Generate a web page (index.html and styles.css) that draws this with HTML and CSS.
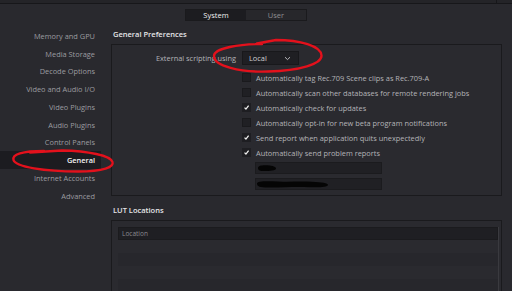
FILE: index.html
```html
<!DOCTYPE html>
<html>
<head>
<meta charset="utf-8">
<link rel="stylesheet" href="styles.css">
</head>
<body>
<div class="app">
  <div class="topstrip"><div class="topdivider"></div></div>
  <div class="tabs-row">
    <div class="tabs">
      <div class="tab tab-active">System</div>
      <div class="tab">User</div>
    </div>
  </div>
  <div class="body">
    <nav class="sidebar">
      <div class="nav-item">Memory and GPU</div>
      <div class="nav-item">Media Storage</div>
      <div class="nav-item">Decode Options</div>
      <div class="nav-item">Video and Audio I/O</div>
      <div class="nav-item">Video Plugins</div>
      <div class="nav-item">Audio Plugins</div>
      <div class="nav-item">Control Panels</div>
      <div class="nav-item nav-active">General</div>
      <div class="nav-item">Internet Accounts</div>
      <div class="nav-item">Advanced</div>
    </nav>
    <main class="main">
      <h2 class="section-title">General Preferences</h2>
      <section class="panel panel-general">
        <div class="form-row">
          <label class="form-label">External scripting using</label>
          <div class="select">
            <span>Local</span>
            <svg class="chev" width="7" height="5" viewBox="0 0 7 5"><path d="M1 1.2 L3.5 3.6 L6 1.2" fill="none" stroke="#b8b8bc" stroke-width="1"/></svg>
          </div>
        </div>
        <div class="checks">
          <div class="check-row"><span class="cb"></span><span>Automatically tag Rec.709 Scene clips as Rec.709-A</span></div>
          <div class="check-row"><span class="cb"></span><span>Automatically scan other databases for remote rendering jobs</span></div>
          <div class="check-row"><span class="cb cb-on"><svg width="9" height="9" viewBox="0 0 9 9"><path d="M2 4.6 L3.8 6.6 L7.2 2" fill="none" stroke="#f2f2f2" stroke-width="1.6"/></svg></span><span>Automatically check for updates</span></div>
          <div class="check-row"><span class="cb"></span><span>Automatically opt-in for new beta program notifications</span></div>
          <div class="check-row"><span class="cb cb-on"><svg width="9" height="9" viewBox="0 0 9 9"><path d="M2 4.6 L3.8 6.6 L7.2 2" fill="none" stroke="#f2f2f2" stroke-width="1.6"/></svg></span><span>Send report when application quits unexpectedly</span></div>
          <div class="check-row"><span class="cb cb-on"><svg width="9" height="9" viewBox="0 0 9 9"><path d="M2 4.6 L3.8 6.6 L7.2 2" fill="none" stroke="#f2f2f2" stroke-width="1.6"/></svg></span><span>Automatically send problem reports</span></div>
          <div class="field">
            <svg class="redact" width="30" height="12" viewBox="0 0 30 12"><path d="M2 6 C2 3, 8 3, 14 3.5 C18 4, 20 5, 20 6.5 C20 8.5, 14 9, 8 9 C4 9, 2 8.5, 2 6 Z" fill="#050505"/></svg>
          </div>
          <div class="field">
            <svg class="redact" width="80" height="12" viewBox="0 0 80 12"><path d="M1 5.5 C1 3, 10 3, 22 3.5 C34 4, 44 3.2, 56 3.8 C66 4.2, 72 5, 72 7 C72 9.5, 60 9.5, 48 9 C36 8.6, 24 9.8, 12 9.6 C4 9.5, 1 8.5, 1 5.5 Z" fill="#050505"/></svg>
          </div>
        </div>
      </section>
      <h2 class="section-title section-title-2">LUT Locations</h2>
      <section class="panel panel-lut">
        <div class="table">
          <div class="thead">Location</div>
          <div class="trow"></div>
          <div class="trow trow-alt"></div>
          <div class="trow"></div>
          <div class="trow trow-alt"></div>
        </div>
      </section>
    </main>
  </div>
  <svg class="annotations" width="512" height="291" viewBox="0 0 512 291">
    <path d="M262 44 C240 44, 214 48, 214 56 C214 66, 240 72.5, 268 71.5 C300 70.5, 322 64, 321.5 55.5 C321 46, 300 40, 276 40 L257 43.5 L266 42" fill="none" stroke="#e3111c" stroke-width="2.4" stroke-linecap="round" stroke-linejoin="round"/>
    <path d="M44 151 C22 151, 12 154.5, 13.5 160 C15.5 167, 45 171.5, 78 171.5 C104 171.5, 114 167, 112.5 162 C110.5 155.5, 88 151, 62 150.5 L30 152.5" fill="none" stroke="#e3111c" stroke-width="2.4" stroke-linecap="round" stroke-linejoin="round"/>
  </svg>
</div>
</body>
</html>
```

FILE: styles.css
```css
* { box-sizing: border-box; }
html, body { margin: 0; padding: 0; }
body {
  width: 512px;
  height: 291px;
  overflow: hidden;
  background: #29292e;
  font-family: "Open Sans", "DejaVu Sans", sans-serif;
  font-size: 7.4px;
  color: #b4b4b8;
}
.app { position: relative; width: 512px; height: 291px; }
.topstrip {
  height: 4px;
  background: #242428;
  border-bottom: 1px solid #17171a;
  position: relative;
}
.topdivider {
  position: absolute;
  left: 496px;
  top: 0;
  width: 1px;
  height: 4px;
  background: #17171a;
}
.tabs-row { display: flex; padding: 5px 0 0 185px; height: 17px; }
.tabs { display: flex; height: 12px; border: 1px solid #1a1a1d; }
.tab {
  width: 60px;
  display: flex;
  align-items: center;
  justify-content: center;
  background: #27272b;
  color: #8e8e92;
  font-size: 7.5px;
}
.tab-active { background: #1c1c20; color: #f0f0f0; }
.body { display: flex; }
.sidebar { width: 101px; padding-top: 6px; flex: none; }
.nav-item {
  height: 17.75px;
  display: flex;
  align-items: center;
  justify-content: flex-end;
  padding-right: 6px;
  color: #9c9ca0;
}
.nav-active { background: #1c1c20; color: #f4f4f4; font-weight: 600; }
.main { margin-left: 10px; width: 391px; padding-top: 8px; }
.section-title {
  margin: 0 0 4px 2px;
  font-size: 7.5px;
  font-weight: 600;
  color: #e6e6e8;
  height: 11px;
  line-height: 11px;
}
.section-title-2 { margin-top: 9px; }
.panel { border: 1px solid #1a1a1d; background: #2a2a2f; }
.panel-general { height: 152px; padding-top: 6px; }
.form-row { display: flex; align-items: center; height: 14px; }
.form-label { width: 124px; text-align: right; margin-right: 6px; }
.select {
  width: 57px;
  height: 14px;
  background: #1f1f23;
  border: 1px solid #18181b;
  display: flex;
  align-items: center;
  justify-content: space-between;
  padding: 0 7px 0 6px;
  color: #d0d0d2;
}
.checks { margin-left: 130px; padding-top: 5px; }
.check-row { height: 15px; display: flex; align-items: center; gap: 5px; }
.cb {
  width: 9px;
  height: 9px;
  background: #202024;
  border: 1px solid #1a1a1d;
  display: flex;
  align-items: center;
  justify-content: center;
  flex: none;
}
.cb-on { background: #1e1e22; border-color: #1e1e22; }
.cb svg { display: block; }
.field {
  margin-left: 13px;
  width: 127px;
  height: 12px;
  background: #202024;
  border: 1px solid #1b1b1e;
  margin-top: 2px;
  display: flex;
  align-items: center;
}
.field + .field { margin-top: 4px; }
.redact { display: block; }
.panel-lut { height: 80px; padding: 6px 2px 0 6px; }
.table { border-right: 1px solid #3a3a3f; }
.thead {
  height: 13px;
  background: #1f1f23;
  border: 1px solid #1b1b1e;
  color: #8a8a8e;
  font-size: 6.5px;
  display: flex;
  align-items: center;
  padding-left: 3px;
}
.trow { height: 13px; background: #2a2a2f; }
.trow-alt { background: #27272c; }
.annotations { position: absolute; left: 0; top: 0; pointer-events: none; }
```
